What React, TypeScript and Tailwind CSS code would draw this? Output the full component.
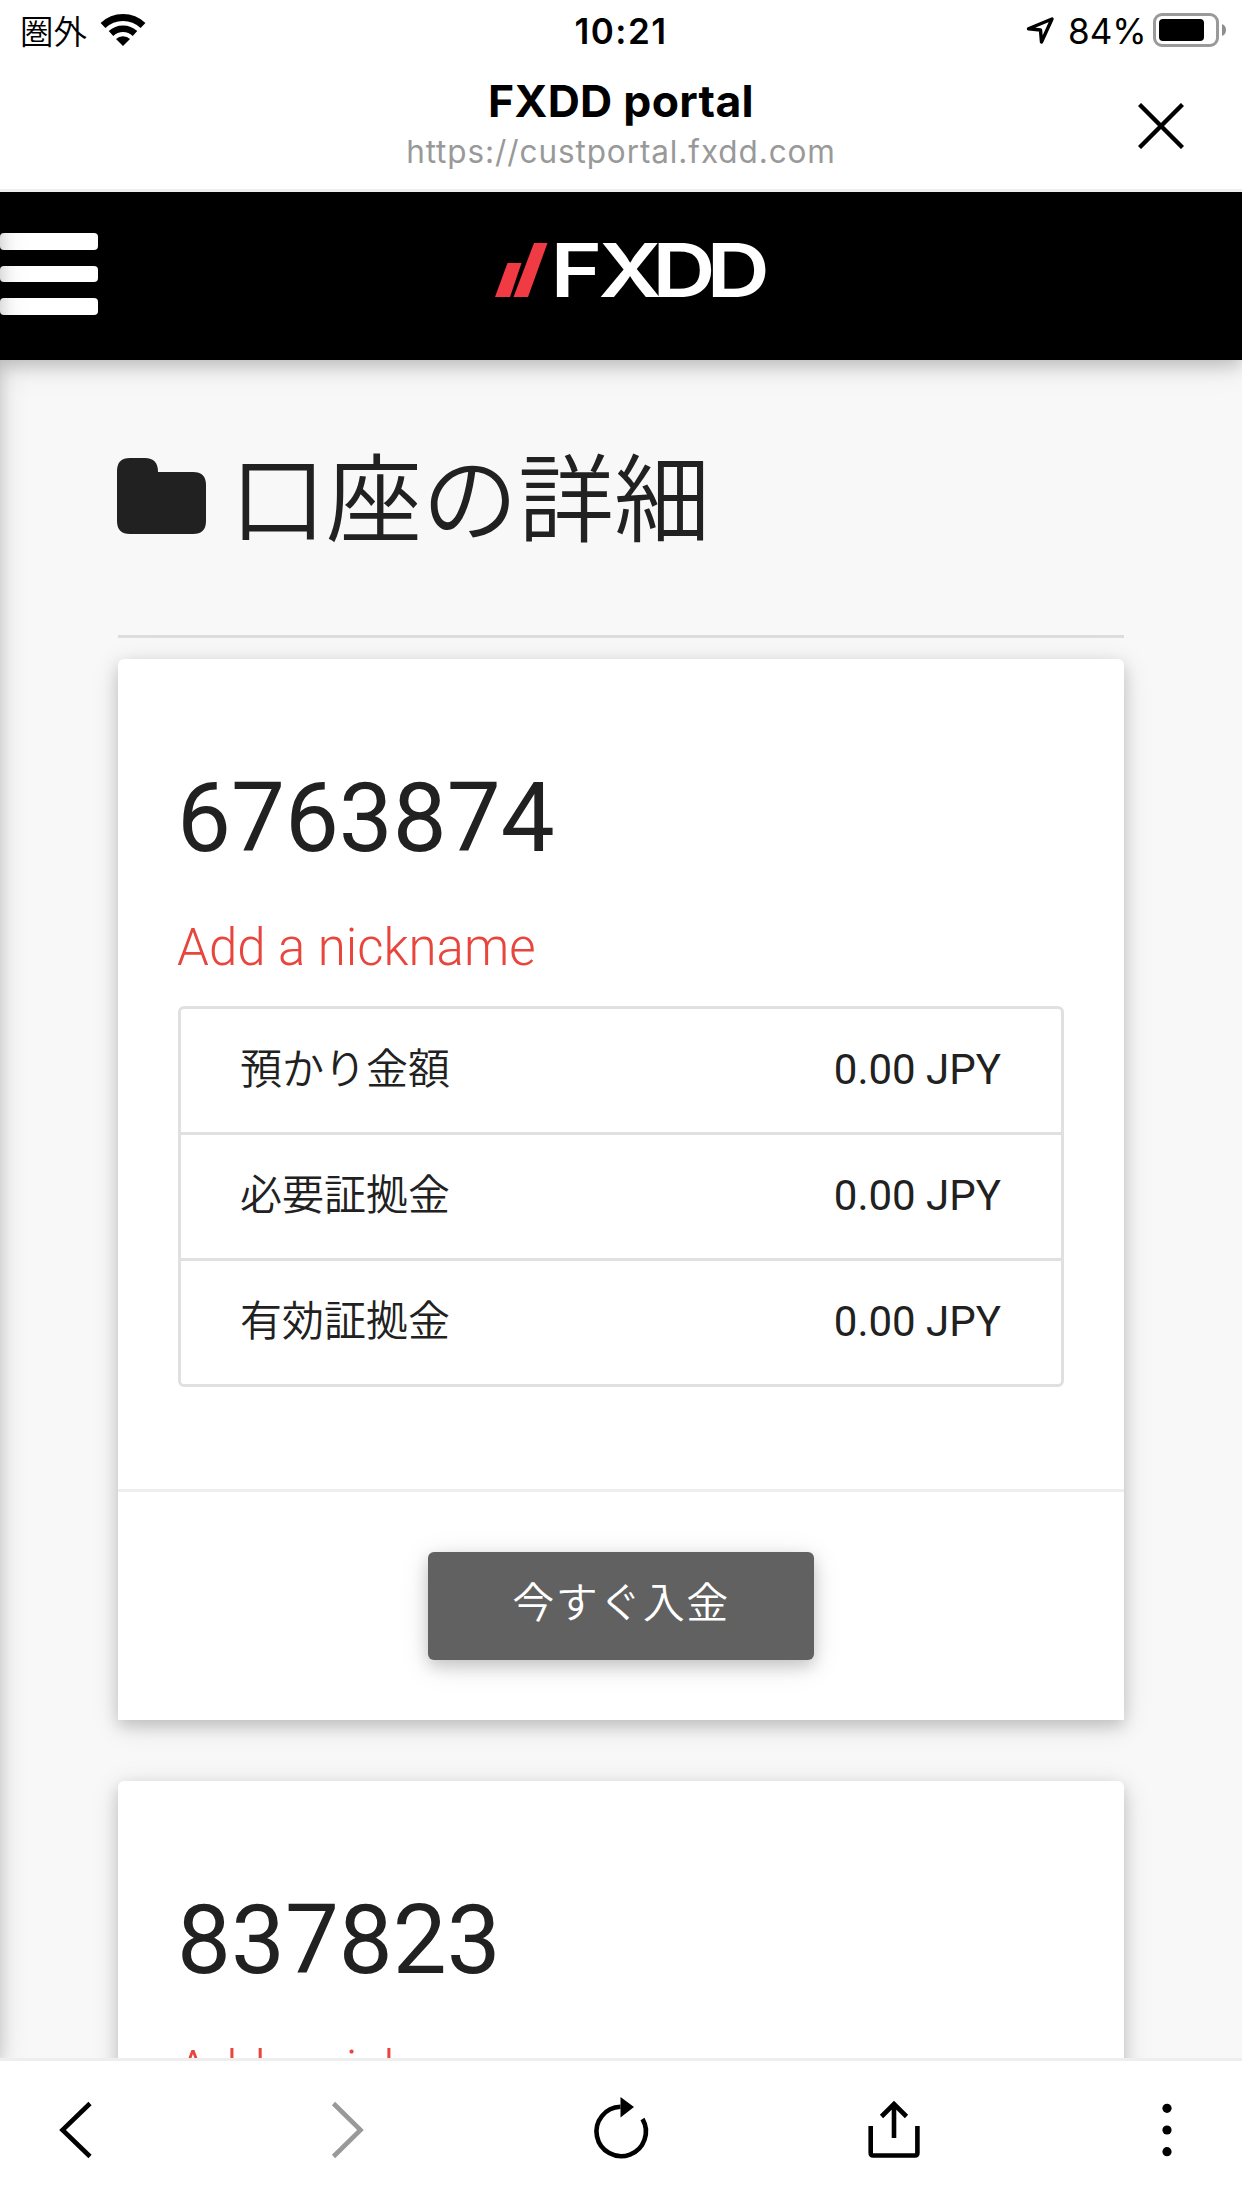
import React from "react";

const JP = "font-['Roboto','Noto_Sans_CJK_JP',sans-serif]";

type Account = { id: string; rows: { label: string; value: string }[] };

const accounts: Account[] = [
  {
    id: "6763874",
    rows: [
      { label: "預かり金額", value: "0.00 JPY" },
      { label: "必要証拠金", value: "0.00 JPY" },
      { label: "有効証拠金", value: "0.00 JPY" },
    ],
  },
  { id: "837823", rows: [] },
];

function StatusBar() {
  return (
    <div className="grid h-[62px] grid-cols-3 items-start text-black">
      <div className="flex pl-[20px]">
        <span className="mt-[7px] w-[80px] whitespace-nowrap font-['Noto_Sans_CJK_JP',sans-serif] text-[33.5px] leading-[46px] font-[350]">
          圏外
        </span>
        <svg className="mt-[13px] h-[33px] w-[46px]" viewBox="0 0 46 33" fill="none">
          <path d="M3 12.5 A29 29 0 0 1 43 12.5" stroke="#000" strokeWidth="7" />
          <path d="M11 20.5 A17.5 17.5 0 0 1 35 20.5" stroke="#000" strokeWidth="6.6" />
          <path d="M23 33 L16 26 A10 10 0 0 1 30 26 Z" fill="#000" />
        </svg>
      </div>
      <div className="mt-[10px] text-center text-[35px] leading-[42px] font-semibold tracking-[1.5px]">
        10:21
      </div>
      <div className="flex justify-end pr-[15px]">
        <svg className="mt-[16px] mr-[13px] h-[29px] w-[29px]" viewBox="0 0 29 29" fill="none">
          <path
            d="M2.500 12.8 L26 3 L15.500 26 L14.500 14 Z"
            stroke="#000"
            strokeWidth="3.4"
            strokeLinejoin="round"
          />
        </svg>
        <span className="mt-[10px] w-[85px] whitespace-nowrap text-[35px] leading-[42px]">84%</span>
        <svg className="mt-[13px] h-[34px] w-[74px]" viewBox="0 0 74 34">
          <rect x="1.5" y="1.5" width="63" height="31" rx="7.5" fill="none" stroke="#9a9a9a" strokeWidth="3" />
          <rect x="6" y="6" width="45" height="22" rx="4" fill="#000" />
          <path d="M69 11 A6.5 6.5 0 0 1 69 23 Z" fill="#8e8e8e" />
        </svg>
      </div>
    </div>
  );
}

function TitleBar() {
  return (
    <div className="relative flex h-[127px] flex-col items-center">
      <div className="mt-[13px] text-[44.5px] leading-[52px] font-bold tracking-[0.3px] text-black">FXDD portal</div>
      <div className="mt-px text-[31.5px] leading-[48px] tracking-[0.9px] text-[#999]">
        https://custportal.fxdd.com
      </div>
      <svg className="absolute top-[41px] right-[58px] h-[46px] w-[46px]" viewBox="0 0 46 46">
        <path d="M1.500 1.500 L44.500 44.500 M44.500 1.500 L1.500 44.500" stroke="#000" strokeWidth="4.4" />
      </svg>
    </div>
  );
}

function SiteHeader() {
  return (
    <header className="relative flex h-[168px] shrink-0 items-start justify-center bg-black shadow-[0_6px_15px_rgba(0,0,0,0.16),0_6px_30px_rgba(0,0,0,0.12)]">
      <div className="absolute top-[41px] left-0 flex w-[98px] flex-col gap-[16px]">
        <div className="h-[16.7px] rounded-[4px] bg-white" />
        <div className="h-[16.7px] rounded-[4px] bg-white" />
        <div className="h-[16.7px] rounded-[4px] bg-white" />
      </div>
      <svg className="mt-[45px] ml-[18px] h-[66px] w-[276px] overflow-visible" viewBox="0 0 276 66">
        <path d="M3 60 L15.500 26 H29.500 L18 60 Z M21.500 60 L42 6 H55.500 L36 60 Z" fill="#f03a44" />
        <text
          x="49.500 90.300 135.800 181.700"
          y="60"
          fontSize="74.300"
          fontWeight="600"
          transform="scale(1.18 1)"
          fill="#fff"
          className="font-['Inter',sans-serif]"
        >
          FXDD
        </text>
      </svg>
    </header>
  );
}

function AccountCard({ account }: { account: Account }) {
  return (
    <section className="mb-[61px] h-[1061px] shrink-0 rounded-t-[6px] bg-white shadow-[0_6px_15px_rgba(0,0,0,0.16),0_6px_30px_rgba(0,0,0,0.12)]">
      <div className="h-[830px] px-[60px] pt-[101px]">
        <h2 className="-ml-px text-[96px] leading-[116px] text-[#212121]">{account.id}</h2>
        <a className="mt-[36px] -ml-px block text-[51px] leading-[72px] font-light text-[#e8453c]">Add a nickname</a>
        {account.rows.length > 0 && (
          <ul className="mt-[22px] divide-y-[3px] divide-[#e0e0e0] rounded-[6px] border-[3px] border-[#e0e0e0]">
            {account.rows.map((row) => (
              <li
                key={row.label}
                className="box-content flex h-[121px] items-center justify-between pr-[60px] pb-[2px] pl-[59px] text-[42px] leading-[60px] text-[#212121]"
              >
                <span className="font-[350]">{row.label}</span>
                <span>{row.value}</span>
              </li>
            ))}
          </ul>
        )}
      </div>
      {account.rows.length > 0 && (
        <div className="flex justify-center border-t-[3px] border-[#eee] pt-[60px]">
          <button className="h-[108px] w-[386px] rounded-[6px] bg-[#616161] pb-[5px] text-[42px] leading-[60px] font-[350] tracking-[1.500px] text-white shadow-[0_6px_15px_rgba(0,0,0,0.16),0_6px_30px_rgba(0,0,0,0.12)]">
            今すぐ入金
          </button>
        </div>
      )}
    </section>
  );
}

function Toolbar() {
  return (
    <nav className="flex h-[150px] shrink-0 items-start justify-between border-t-[3px] border-[#eee] bg-white px-[45px] pt-[34px]">
      <svg className="h-[70px] w-[60px]" viewBox="0 0 60 70" fill="none">
        <path d="M45 8.500 L17.500 35 L45 61.500" stroke="#000" strokeWidth="4.600" />
      </svg>
      <svg className="h-[70px] w-[60px]" viewBox="0 0 60 70" fill="none">
        <path d="M15.500 8.500 L42.500 35 L15.500 61.500" stroke="#999" strokeWidth="4.600" />
      </svg>
      <svg className="h-[70px] w-[60px]" viewBox="0 0 60 70" fill="none">
        <path d="M29.500 11.800 A24.700 24.700 0 1 0 51.500 24" stroke="#000" strokeWidth="4.600" />
        <path d="M29.500 2 L43 12 L29.500 22.500 Z" fill="#000" />
      </svg>
      <svg className="h-[70px] w-[60px]" viewBox="0 0 60 70" fill="none">
        <path
          d="M6.700 31 V58 Q6.700 60.500 9.200 60.500 H51 Q53.400 60.500 53.400 58 V31"
          stroke="#000"
          strokeWidth="4.600"
        />
        <path d="M30 43 V9 M17.500 21.500 L30 9 L42.500 21.500" stroke="#000" strokeWidth="4.600" />
      </svg>
      <svg className="h-[70px] w-[60px]" viewBox="0 0 60 70">
        <circle cx="30" cy="13.300" r="4.600" />
        <circle cx="30" cy="35" r="4.600" />
        <circle cx="30" cy="56.700" r="4.600" />
      </svg>
    </nav>
  );
}

export default function App() {
  return (
    <div className="flex h-[2208px] w-[1242px] flex-col overflow-hidden bg-white font-['Inter',sans-serif]">
      <div className="h-[192px] shrink-0 border-b-[3px] border-[#eee]">
        <StatusBar />
        <TitleBar />
      </div>
      <div className={`relative flex h-[1866px] shrink-0 flex-col overflow-hidden bg-[#f8f8f8] ${JP}`}>
        <SiteHeader />
        <main className="flex flex-col px-[118px]">
          <div className="flex h-[278px] items-start border-b-[3px] border-[#ddd]">
            <svg className="mt-[98px] -ml-px h-[76px] w-[89px]" viewBox="0 0 89 76">
              <path
                d="M13 0 H28 Q41 0 41 14 H76 Q89 14 89 27 V63 Q89 76 76 76 H13 Q0 76 0 63 V13 Q0 0 13 0 Z"
                fill="#212121"
              />
            </svg>
            <h1 className="mt-[71px] ml-[24px] text-[96px] leading-[140px] font-[350] text-[#212121]">口座の詳細</h1>
          </div>
          <div className="mt-[21px] flex flex-col">
            {accounts.map((account) => (
              <AccountCard key={account.id} account={account} />
            ))}
          </div>
        </main>
        <div className="absolute top-0 -left-[300px] h-[1866px] w-[300px] shadow-[0_6px_15px_rgba(0,0,0,0.16),0_6px_30px_rgba(0,0,0,0.12)]" />
      </div>
      <Toolbar />
    </div>
  );
}
